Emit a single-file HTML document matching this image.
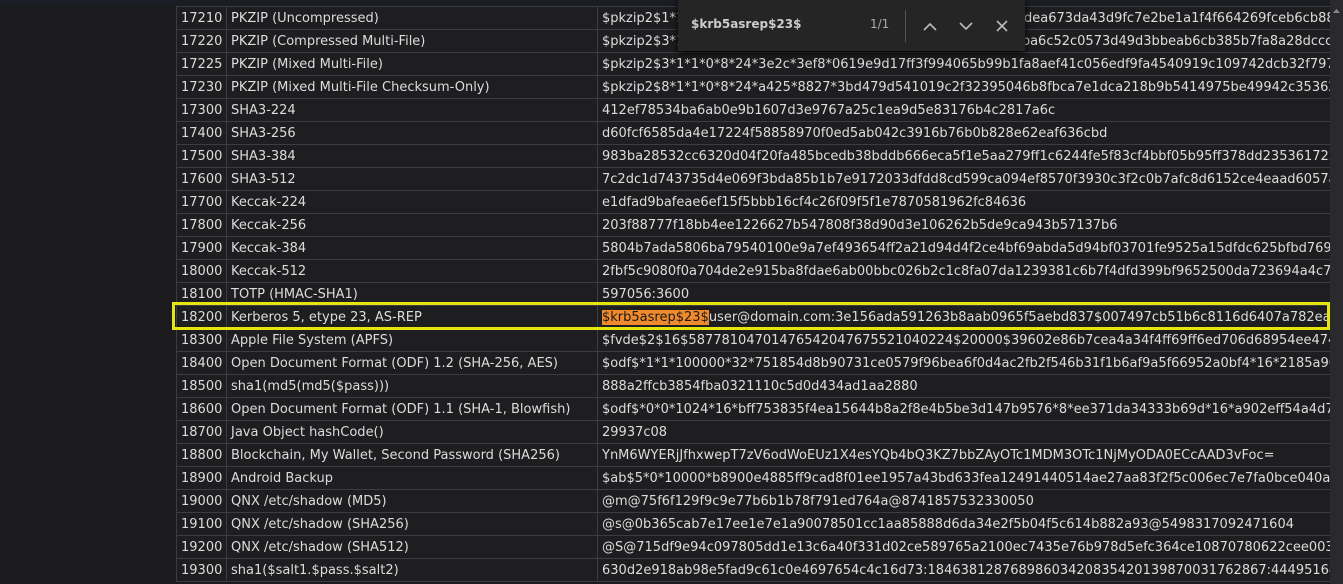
<!DOCTYPE html>
<html><head><meta charset="utf-8"><style>
html,body{margin:0;padding:0;width:1343px;height:584px;overflow:hidden;background:#1b1b1d;font-family:"DejaVu Sans",Verdana,sans-serif;}
#top{position:absolute;left:0;top:0;width:1343px;height:6px;background:#1a1d24;}
table{position:absolute;left:176px;top:6px;border-collapse:collapse;table-layout:fixed;width:1200px;background:#1e1e20;}
td{border:1px solid #3a3d44;color:#dcdcdc;font-size:13px;white-space:nowrap;overflow:hidden;padding:1px 0 0 4px;height:21px;line-height:21px;}
td.i{width:45px;}td.n{width:366px;}
#wrap{position:absolute;left:0;top:0;width:1330px;height:584px;overflow:hidden;}
#sb{position:absolute;left:1330px;top:0;width:13px;height:584px;background:#2a2a2d;}
#hl{position:absolute;left:172px;top:302px;width:1152px;height:22px;border:3px solid #e5e510;}
.m{background:#f08a2c;color:#1a1a1a;}
#find{position:absolute;left:678px;top:0;width:347px;height:51px;background:#252526;box-shadow:0 2px 8px #000;}
#find .q{position:absolute;left:13px;top:17px;font-size:12px;font-weight:bold;color:#ccc;}
#find .c{position:absolute;left:192px;top:17px;font-size:12px;color:#aaa;}
#find .s{position:absolute;left:227px;top:10px;width:1px;height:32px;background:#555;}
</style></head><body>
<div id="top"></div>
<div id="wrap">
<table>
<tr><td class="i">17210</td><td class="n">PKZIP (Uncompressed)</td><td>$pkzip2$1*1*2*0*1d1*1c5*eda7a8de*0*28*0*1d1*eda7*5096*1dea673da43d9fc7e2be1a1f4f664269fceb6cb88</td></tr>
<tr><td class="i">17220</td><td class="n">PKZIP (Compressed Multi-File)</td><td>$pkzip2$3*1*1*0*8*24*a425*8827*d1730095cd829e245df04ebba6c52c0573d49d3bbeab6cb385b7fa8a28dcccd</td></tr>
<tr><td class="i">17225</td><td class="n">PKZIP (Mixed Multi-File)</td><td>$pkzip2$3*1*1*0*8*24*3e2c*3ef8*0619e9d17ff3f994065b99b1fa8aef41c056edf9fa4540919c109742dcb32f797</td></tr>
<tr><td class="i">17230</td><td class="n">PKZIP (Mixed Multi-File Checksum-Only)</td><td>$pkzip2$8*1*1*0*8*24*a425*8827*3bd479d541019c2f32395046b8fbca7e1dca218b9b5414975be49942c35362</td></tr>
<tr><td class="i">17300</td><td class="n">SHA3-224</td><td>412ef78534ba6ab0e9b1607d3e9767a25c1ea9d5e83176b4c2817a6c</td></tr>
<tr><td class="i">17400</td><td class="n">SHA3-256</td><td>d60fcf6585da4e17224f58858970f0ed5ab042c3916b76b0b828e62eaf636cbd</td></tr>
<tr><td class="i">17500</td><td class="n">SHA3-384</td><td>983ba28532cc6320d04f20fa485bcedb38bddb666eca5f1e5aa279ff1c6244fe5f83cf4bbf05b95ff378dd2353617221</td></tr>
<tr><td class="i">17600</td><td class="n">SHA3-512</td><td>7c2dc1d743735d4e069f3bda85b1b7e9172033dfdd8cd599ca094ef8570f3930c3f2c0b7afc8d6152ce4eaad6057a2ff</td></tr>
<tr><td class="i">17700</td><td class="n">Keccak-224</td><td>e1dfad9bafeae6ef15f5bbb16cf4c26f09f5f1e7870581962fc84636</td></tr>
<tr><td class="i">17800</td><td class="n">Keccak-256</td><td>203f88777f18bb4ee1226627b547808f38d90d3e106262b5de9ca943b57137b6</td></tr>
<tr><td class="i">17900</td><td class="n">Keccak-384</td><td>5804b7ada5806ba79540100e9a7ef493654ff2a21d94d4f2ce4bf69abda5d94bf03701fe9525a15dfdc625bfbd769701</td></tr>
<tr><td class="i">18000</td><td class="n">Keccak-512</td><td>2fbf5c9080f0a704de2e915ba8fdae6ab00bbc026b2c1c8fa07da1239381c6b7f4dfd399bf9652500da723694a4c719c</td></tr>
<tr><td class="i">18100</td><td class="n">TOTP (HMAC-SHA1)</td><td>597056:3600</td></tr>
<tr><td class="i">18200</td><td class="n">Kerberos 5, etype 23, AS-REP</td><td><span class="m">$krb5asrep$23$</span>user@domain.com:3e156ada591263b8aab0965f5aebd837$007497cb51b6c8116d6407a782ea0e1</td></tr>
<tr><td class="i">18300</td><td class="n">Apple File System (APFS)</td><td>$fvde$2$16$58778104701476542047675521040224$20000$39602e86b7cea4a34f4ff69ff6ed706d68954ee474de</td></tr>
<tr><td class="i">18400</td><td class="n">Open Document Format (ODF) 1.2 (SHA-256, AES)</td><td>$odf$*1*1*100000*32*751854d8b90731ce0579f96bea6f0d4ac2fb2f546b31f1b6af9a5f66952a0bf4*16*2185a966</td></tr>
<tr><td class="i">18500</td><td class="n">sha1(md5(md5($pass)))</td><td>888a2ffcb3854fba0321110c5d0d434ad1aa2880</td></tr>
<tr><td class="i">18600</td><td class="n">Open Document Format (ODF) 1.1 (SHA-1, Blowfish)</td><td>$odf$*0*0*1024*16*bff753835f4ea15644b8a2f8e4b5be3d147b9576*8*ee371da34333b69d*16*a902eff54a4d78</td></tr>
<tr><td class="i">18700</td><td class="n">Java Object hashCode()</td><td>29937c08</td></tr>
<tr><td class="i">18800</td><td class="n">Blockchain, My Wallet, Second Password (SHA256)</td><td>YnM6WYERjJfhxwepT7zV6odWoEUz1X4esYQb4bQ3KZ7bbZAyOTc1MDM3OTc1NjMyODA0ECcAAD3vFoc=</td></tr>
<tr><td class="i">18900</td><td class="n">Android Backup</td><td>$ab$5*0*10000*b8900e4885ff9cad8f01ee1957a43bd633fea12491440514ae27aa83f2f5c006ec7e7fa0bce040add</td></tr>
<tr><td class="i">19000</td><td class="n">QNX /etc/shadow (MD5)</td><td>@m@75f6f129f9c9e77b6b1b78f791ed764a@8741857532330050</td></tr>
<tr><td class="i">19100</td><td class="n">QNX /etc/shadow (SHA256)</td><td>@s@0b365cab7e17ee1e7e1a90078501cc1aa85888d6da34e2f5b04f5c614b882a93@5498317092471604</td></tr>
<tr><td class="i">19200</td><td class="n">QNX /etc/shadow (SHA512)</td><td>@S@715df9e94c097805dd1e13c6a40f331d02ce589765a2100ec7435e76b978d5efc364ce10870780622cee003c9</td></tr>
<tr><td class="i">19300</td><td class="n">sha1($salt1.$pass.$salt2)</td><td>630d2e918ab98e5fad9c61c0e4697654c4c16d73:18463812876898603420835420139870031762867:44495164</td></tr>
</table>
<div id="hl"></div>
</div>
<div id="sb"><svg width="13" height="14" style="position:absolute;top:4px;left:0"><path d="M3 9 L6.5 5 L10 9Z" fill="#888"/></svg></div>
<div id="find">
<span class="q">$krb5asrep$23$</span>
<span class="c">1/1</span>
<div class="s"></div>
<svg width="120" height="51" style="position:absolute;left:240px;top:0" fill="none" stroke="#bbb" stroke-width="1.6">
<path d="M6 30 L12 24 L18 30"/>
<path d="M42 23 L48 29 L54 23"/>
<path d="M79 21 L89 31 M89 21 L79 31"/>
</svg>
</div>
</body></html>
